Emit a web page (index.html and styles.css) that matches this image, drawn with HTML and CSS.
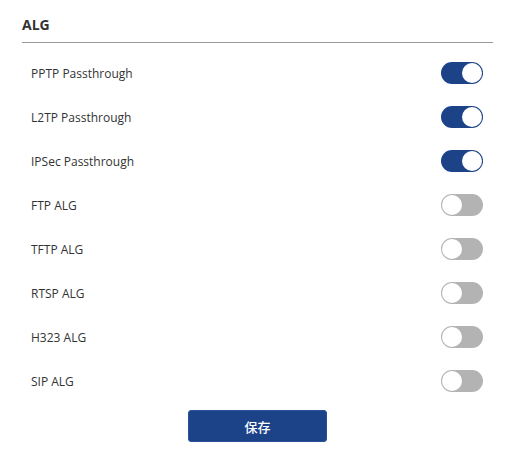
FILE: index.html
```html
<!DOCTYPE html>
<html lang="zh">
<head>
<meta charset="utf-8">
<title>ALG</title>
<link rel="stylesheet" href="styles.css">
</head>
<body>
<div class="panel">
  <h2 class="title">ALG</h2>
  <ul class="list">
    <li class="row"><span class="label">PPTP Passthrough</span><span class="switch on"><span class="knob"></span></span></li>
    <li class="row"><span class="label">L2TP Passthrough</span><span class="switch on"><span class="knob"></span></span></li>
    <li class="row"><span class="label">IPSec Passthrough</span><span class="switch on"><span class="knob"></span></span></li>
    <li class="row"><span class="label">FTP ALG</span><span class="switch"><span class="knob"></span></span></li>
    <li class="row"><span class="label">TFTP ALG</span><span class="switch"><span class="knob"></span></span></li>
    <li class="row"><span class="label">RTSP ALG</span><span class="switch"><span class="knob"></span></span></li>
    <li class="row"><span class="label">H323 ALG</span><span class="switch"><span class="knob"></span></span></li>
    <li class="row"><span class="label">SIP ALG</span><span class="switch"><span class="knob"></span></span></li>
  </ul>
  <div class="actions"><button class="save">保存</button></div>
</div>
</body>
</html>
```
FILE: styles.css
```css
html, body {
  margin: 0;
  padding: 0;
  background: #fff;
}
body {
  font-family: "Open Sans", "Noto Sans CJK SC", sans-serif;
  color: #333;
}
.panel {
  padding: 16px 26px 0 22px;
}
.title {
  margin: 0;
  font-size: 14px;
  font-weight: 700;
  line-height: 18px;
  padding-bottom: 8px;
  border-bottom: 1px solid #999;
  color: #333;
}
.list {
  list-style: none;
  margin: 8px 0 0;
  padding: 0;
}
.row {
  height: 44px;
  display: flex;
  align-items: center;
  justify-content: space-between;
  padding: 0 10px 0 9px;
}
.label {
  font-size: 12px;
  color: #333;
}
.switch {
  width: 42px;
  height: 22px;
  border-radius: 11px;
  background: #b3b3b3;
  display: flex;
  align-items: center;
  box-sizing: border-box;
  padding: 1px;
}
.switch .knob {
  width: 20px;
  height: 20px;
  border-radius: 50%;
  background: #fff;
}
.switch.on {
  background: #1c4288;
  justify-content: flex-end;
}
.actions {
  display: flex;
  justify-content: center;
  margin-top: 7px;
}
.save {
  width: 139px;
  height: 32px;
  border: 1px solid #2a5298;
  border-radius: 3px;
  background: #1c4288;
  color: #fff;
  font-family: "Noto Sans CJK SC", sans-serif;
  font-size: 13px;
  font-weight: 500;
}
```
